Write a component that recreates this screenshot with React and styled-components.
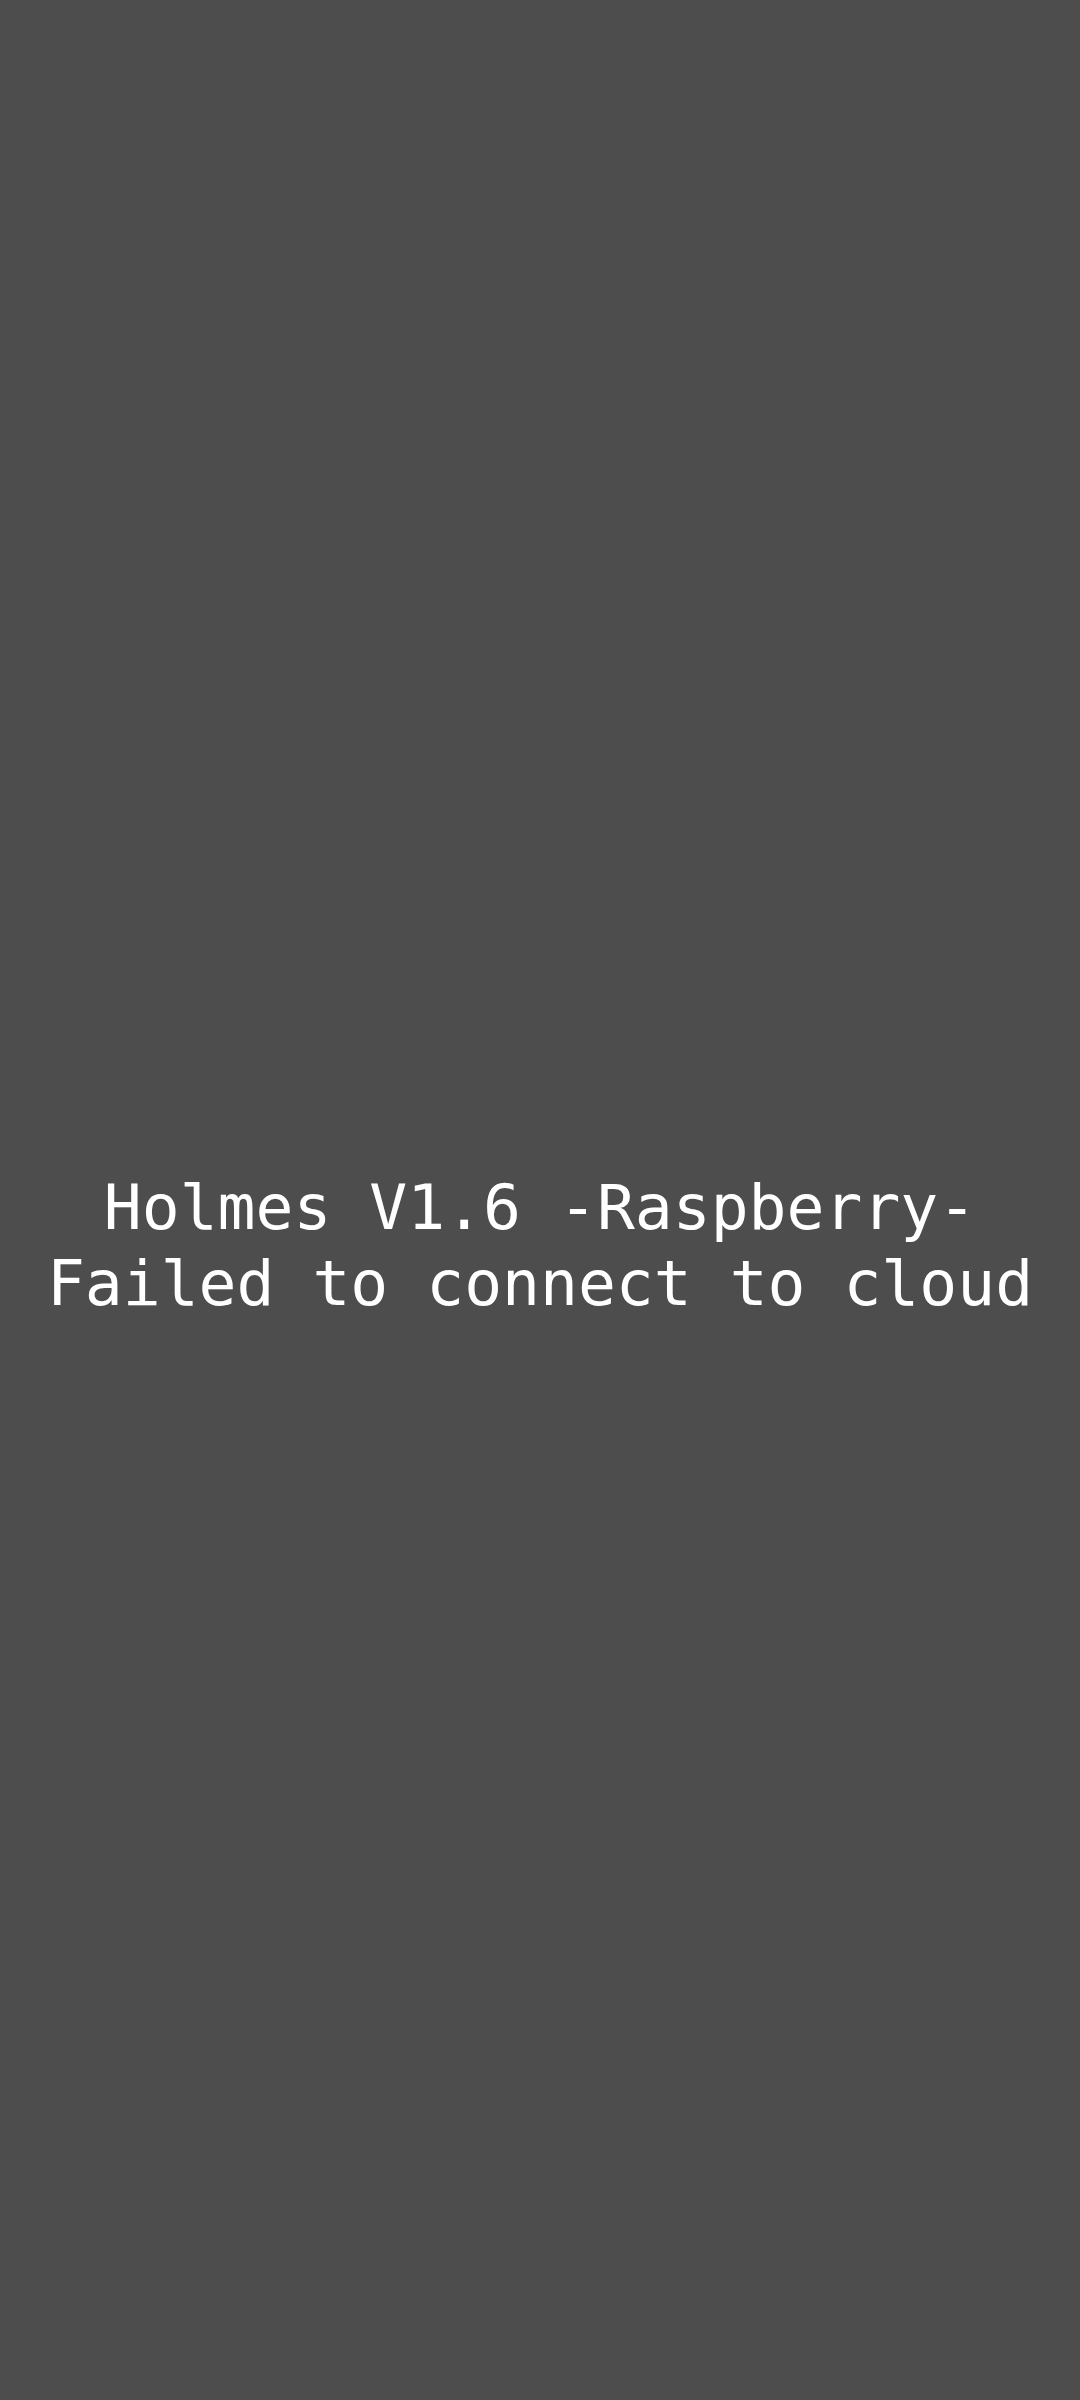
import React from "react";
import styled, { createGlobalStyle } from "styled-components";

const GlobalStyle = createGlobalStyle`
  body {
    margin: 0;
    background: #4d4d4d;
  }
`;

const Screen = styled.main`
  min-height: 100vh;
  box-sizing: border-box;
  padding-top: 92px;
  display: flex;
  flex-direction: column;
  align-items: center;
  justify-content: center;
  background: #4d4d4d;
  color: #ffffff;
  font-family: "Droid Sans Mono", "DejaVu Sans Mono", "Liberation Mono", monospace;
`;

const Line = styled.p`
  margin: 0;
  font-size: 63px;
  line-height: 76px;
  text-align: center;
`;

export default function App() {
  return (
    <>
      <GlobalStyle />
      <Screen>
        <Line>Holmes V1.6 -Raspberry-</Line>
        <Line role="status">Failed to connect to cloud</Line>
      </Screen>
    </>
  );
}
